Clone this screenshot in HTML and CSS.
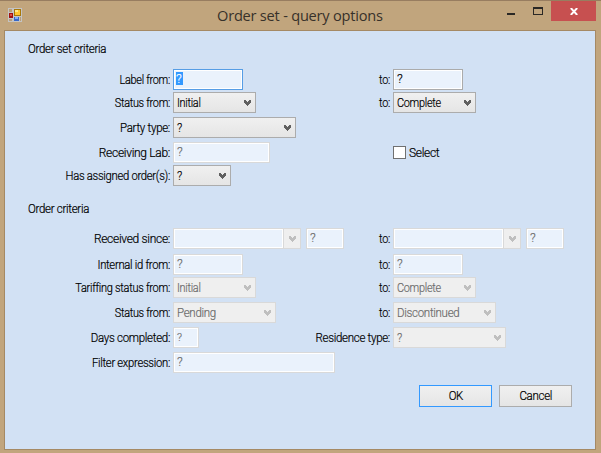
FILE: index.html
```html
<!DOCTYPE html>
<html lang="en">
<head>
<meta charset="utf-8">
<title>Order set - query options</title>
<link rel="stylesheet" href="styles.css">
</head>
<body>
<svg width="0" height="0" class="defs"><symbol id="chev" viewBox="0 0 7 6"><path d="M0 0h2v1h1v1h1V1h1V0h2v3H6v1H5v1H4v1H3V5H2V4H1V3H0z"/></symbol></svg>
<div class="window">
  <header class="titlebar">
    <svg class="app-icon" width="14" height="14" viewBox="0 0 14 14" shape-rendering="crispEdges">
      <path fill="#c4c4c4" d="M0 0h14v14H0z"/><path fill="#b99d78" d="M1 1h3v3H1zM1 11h3v2H1zM12 9h1v4h-1z"/>
      <path fill="#a01010" d="M1 5h4v5H1z"/><path fill="#e05040" d="M2 6h2v2H2z"/>
      <path fill="#a87808" d="M6 1h7v7H6z"/><path fill="#ffc830" d="M7 2h5v5H7z"/><path fill="#ffe88a" d="M7 2h3v2H7z"/>
      <path fill="#3868c8" d="M6 9h5v4H6z"/><path fill="#80b0f8" d="M7 9h3v2H7z"/>
    </svg>
    <h1>Order set - query options</h1>
    <div class="controls">
      <svg width="36" height="20" shape-rendering="crispEdges"><path fill="#2a2825" d="M0 12h8v2H0zM26 6h10v8H26zm1 2v5h8V8z" fill-rule="evenodd"/></svg>
      <span class="close"><svg width="8" height="7" viewBox="0 0 8 7"><path d="M.8 0L7.2 7M7.2 0L.8 7" stroke="#fff" stroke-width="1.9"/></svg></span>
    </div>
  </header>
  <main class="client">
    <h2 class="first">Order set criteria</h2>
    <div class="row gap2"><label class="n87">Label from:</label><div class="left"><span class="text w70 focus"><mark>?</mark></span></div><label class="n87">to:</label><span class="text w70 on">?</span></div>
    <div class="row gap4"><label class="n87">Status from:</label><div class="left"><span class="combo w83"><b class="n87">Initial</b><svg><use href="#chev"/></svg></span></div><label class="n87">to:</label><span class="combo w83"><b class="n87">Complete</b><svg><use href="#chev"/></svg></span></div>
    <div class="row gap4"><label>Party type:</label><span class="combo w123"><b>?</b><svg><use href="#chev"/></svg></span></div>
    <div class="row gap2"><label class="n96">Receiving Lab:</label><div class="left"><span class="text w97">?</span></div><label></label><span class="check"><i></i><b class="n96">Select</b></span></div>
    <div class="row"><label class="n90">Has assigned order(s):</label><span class="combo w58"><b>?</b><svg><use href="#chev"/></svg></span></div>
    <h2 class="second">Order criteria</h2>
    <div class="row gap5"><label class="n96">Received since:</label><div class="left"><span class="text date"></span><span class="drop"><svg><use href="#chev"/></svg></span><span class="text w38">?</span></div><label class="n87">to:</label><span class="text date"></span><span class="drop"><svg><use href="#chev"/></svg></span><span class="text w38">?</span></div>
    <div class="row gap2"><label class="n90">Internal id from:</label><div class="left"><span class="text w70">?</span></div><label class="n87">to:</label><span class="text w70">?</span></div>
    <div class="row gap4"><label class="n88">Tariffing status from:</label><div class="left"><span class="combo off w83"><b class="n87">Initial</b><svg><use href="#chev"/></svg></span></div><label class="n87">to:</label><span class="combo off w83"><b class="n87">Complete</b><svg><use href="#chev"/></svg></span></div>
    <div class="row gap4"><label class="n87">Status from:</label><div class="left"><span class="combo off w103"><b>Pending</b><svg><use href="#chev"/></svg></span></div><label class="n87">to:</label><span class="combo off w103"><b>Discontinued</b><svg><use href="#chev"/></svg></span></div>
    <div class="row gap4"><label>Days completed:</label><div class="left short"><span class="text w26 small">?</span></div><label>Residence type:</label><span class="combo off w113"><b>?</b><svg><use href="#chev"/></svg></span></div>
    <div class="row gap12"><label class="n90">Filter expression:</label><span class="text w162">?</span></div>
    <div class="buttons"><button class="default"><b>OK</b></button><button><b>Cancel</b></button></div>
  </main>
</div>
</body>
</html>
```
FILE: styles.css
```css
* { box-sizing: border-box; }
body { margin: 0; font: 300 12.5px/21px Roboto, "Liberation Sans", sans-serif; letter-spacing: -.32px; color: #000; -webkit-text-stroke: .2px; }
.defs { position: absolute; }
.window { width: 601px; height: 453px; background: #c1a57d; border-top: 1px solid #987d60; padding: 0 5px 3px 4px; display: flex; flex-direction: column; }
.titlebar { height: 29px; display: grid; grid-template-columns: 213px 1fr 89px; flex: none; }
.app-icon { margin: 7px 0 0 4px; }
h1 { margin: 0; font: 14.6px/29px "Open Sans", sans-serif; letter-spacing: -.22px; color: #37312a; white-space: nowrap; -webkit-text-stroke: 0; }
.controls { display: flex; gap: 8px; }
.controls > svg { flex: none; }
.close { flex: none; width: 45px; height: 20px; background: #c75050; display: flex; align-items: center; justify-content: center; }
.client { height: 420px; background: #d2e1f4; border: 1px solid #a58964; white-space: nowrap; }
h2 { margin: 0 0 0 23px; font-size: inherit; font-weight: inherit; transform: scaleX(.92); transform-origin: left; }
.first { padding-top: 7px; height: 38px; }
.second { padding-top: 12px; height: 42px; }
.row { display: flex; height: 21px; }
.gap2 { margin-bottom: 2px; }
.gap4 { margin-bottom: 4px; }
.gap5 { margin-bottom: 5px; }
.gap12 { margin-bottom: 12px; }
label { width: 165px; text-align: right; flex: none; margin-right: 3px; transform: scaleX(.92); transform-origin: right; }
.left { width: 171px; display: flex; flex: none; }
.left + label { width: 46px; }
.left.short { width: 117px; }
.short + label { width: 100px; }
b { font-weight: inherit; display: inline-block; transform: scaleX(.92); transform-origin: left; }
.n87 { transform: scaleX(.87); }
.n88 { transform: scaleX(.88); }
.n90 { transform: scaleX(.9); }
.n96 { transform: scaleX(.96); }
.text { height: 21px; border: 1px solid #d9d9d9; background: #eaf2fc; box-shadow: inset 0 0 0 1px #fff; padding-left: 3px; line-height: 18px; color: #6d6d6d; display: block; }
.text.on { border-color: #ababab; color: #000; }
.text.small { font-size: 11px; line-height: 20px; }
.text.focus { border-color: #569de5; padding: 2px 0 0 2px; }
mark { display: block; width: 7px; height: 13px; line-height: 14px; background: #3399ff; color: #fff; }
.combo { height: 21px; border: 1px solid #acacac; background: linear-gradient(#f0f0f0, #e5e5e5); display: flex; justify-content: space-between; align-items: center; padding: 0 4px 0 3px; line-height: 19px; }
.combo svg, .drop svg { width: 7px; height: 6px; fill: #606060; flex: none; shape-rendering: crispEdges; }
.off { background: #efefef; border-color: #d9d9d9; color: #6d6d6d; }
.off svg, .drop svg { fill: #bfbfbf; }
.date { width: 111px; }
.drop { width: 18px; height: 21px; margin-left: -1px; margin-right: 5px; border: 1px solid #d9d9d9; background: #efefef; display: flex; align-items: center; justify-content: center; }
.check { display: flex; gap: 3px; }
.check i { width: 13px; height: 13px; margin-top: 4px; border: 1px solid #707070; background: #fff; }
.w26 { width: 26px; } .w38 { width: 38px; } .w58 { width: 58px; } .w70 { width: 70px; }
.w83 { width: 83px; } .w97 { width: 97px; } .w103 { width: 103px; } .w113 { width: 113px; }
.w123 { width: 123px; } .w162 { width: 162px; }
.buttons { display: flex; gap: 7px; padding-left: 414px; }
button { width: 73px; height: 22px; padding: 0; border: 1px solid #acacac; background: linear-gradient(#f0f0f0, #e5e5e5); font: inherit; letter-spacing: inherit; line-height: 20px; color: #000; }
button b { transform-origin: center; }
.default { border-color: #3399ff; }
```
